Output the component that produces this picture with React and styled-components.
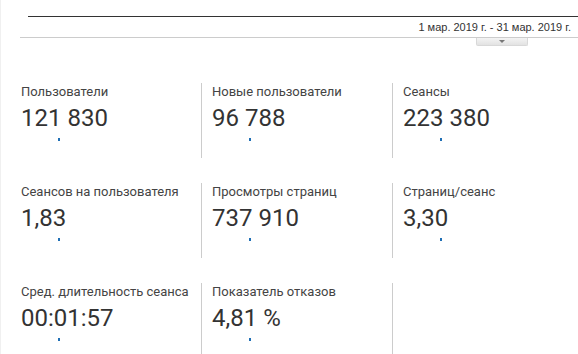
import React from 'react';
import styled, { createGlobalStyle } from 'styled-components';

const GlobalStyle = createGlobalStyle`
  html, body {
    margin: 0;
    padding: 0;
    background: #fff;
  }
  body {
    width: 578px;
    height: 354px;
    overflow: hidden;
    border-left: 1px solid #f0f0f0;
    box-sizing: border-box;
  }
`;

const Header = styled.div`
  padding-top: 16px;
  margin-left: 19px;
`;

const TopRule = styled.div`
  margin-left: 8px;
  border-top: 1px solid #333;
`;

const DateRow = styled.div`
  height: 20px;
  border-bottom: 1px solid #ccc;
  text-align: right;
  padding-right: 7px;
  font-family: 'Liberation Sans', Arial, sans-serif;
  font-size: 11px;
  line-height: 20px;
  color: #333;
`;

const TabRow = styled.div`
  display: flex;
  justify-content: flex-end;
  padding-right: 50px;
`;

const Tab = styled.div`
  width: 50px;
  height: 7px;
  background: linear-gradient(#f4f4f4, #e2e2e2);
  border: 1px solid #d8d8d8;
  border-top: none;
  border-radius: 0 0 2px 2px;
  display: flex;
  align-items: center;
  justify-content: center;

  &::after {
    content: '';
    border-left: 3px solid transparent;
    border-right: 3px solid transparent;
    border-top: 3px solid #777;
  }
`;

const Grid = styled.div`
  display: grid;
  grid-template-columns: repeat(3, 191px);
  grid-auto-rows: 75px;
  row-gap: 25px;
  margin: 37px 0 0 9px;
`;

const Cell = styled.div`
  border-left: 1px solid ${(p) => (p.$first ? 'transparent' : '#ccc')};
  padding: 1px 0 0 10px;
  font-family: Roboto, 'Noto Sans', sans-serif;
`;

const Label = styled.div`
  font-size: 13px;
  line-height: 15px;
  color: #444;
  white-space: nowrap;
`;

const Value = styled.div`
  margin-top: 5px;
  font-size: 24px;
  line-height: 28px;
  color: #333;
`;

const Spark = styled.div`
  height: 10px;
  margin-top: 6px;
  position: relative;

  &::after {
    content: '';
    position: absolute;
    left: 37px;
    top: 0;
    width: 2px;
    height: 3px;
    background: #1f6fb5;
  }
`;

const metrics = [
  ['Пользователи', '121 830'],
  ['Новые пользователи', '96 788'],
  ['Сеансы', '223 380'],
  ['Сеансов на пользователя', '1,83'],
  ['Просмотры страниц', '737 910'],
  ['Страниц/сеанс', '3,30'],
  ['Сред. длительность сеанса', '00:01:57'],
  ['Показатель отказов', '4,81 %'],
  null,
];

const App = () => (
  <>
    <GlobalStyle />
    <Header>
      <TopRule />
      <DateRow>1 мар. 2019 г. - 31 мар. 2019 г.</DateRow>
      <TabRow>
        <Tab />
      </TabRow>
    </Header>
    <Grid>
      {metrics.map((m, i) => (
        <Cell key={i} $first={i % 3 === 0}>
          {m && (
            <>
              <Label>{m[0]}</Label>
              <Value>{m[1]}</Value>
              <Spark />
            </>
          )}
        </Cell>
      ))}
    </Grid>
  </>
);

export default App;
